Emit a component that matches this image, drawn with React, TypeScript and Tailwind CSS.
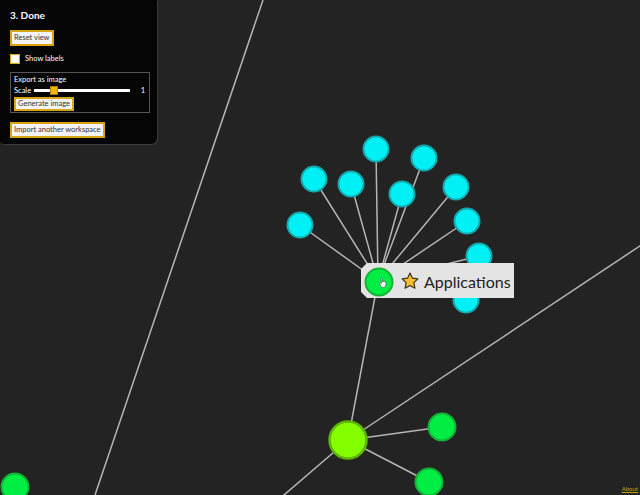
import { useState } from "react";

type Node = { x: number; y: number; r: number; fill: string; stroke: string };

const CYAN = { fill: "#00f0f5", stroke: "#16a9ad" };
const GREEN = { fill: "#00ee44", stroke: "#13b235" };

const hub = { x: 378, y: 281 };
const big = { x: 348, y: 440 };

const leaves: Node[] = [
  [376, 149],
  [424, 158],
  [314, 179],
  [351, 184],
  [402, 194],
  [456, 187],
  [300, 225],
  [467, 221],
  [479, 256],
  [466, 300],
].map(([x, y]) => ({ x, y, r: 12.5, ...CYAN }));

const others: Node[] = [
  { x: 442, y: 427, r: 13.5, ...GREEN },
  { x: 429, y: 482, r: 13.5, ...GREEN },
  { x: 15, y: 487, r: 13.5, ...GREEN },
];

// edges that run off the canvas
const longEdges = [
  [263, 0, 95, 495],
  [big.x, big.y, 700, 206],
  [big.x, big.y, 270, 507],
];

const Graph = () => (
  <svg className="absolute inset-0" width={640} height={495} viewBox="0 0 640 495">
    {longEdges.map(([x1, y1, x2, y2], i) => (
      <line key={i} x1={x1} y1={y1} x2={x2} y2={y2} stroke="#b5b5b5" strokeWidth={1.5} />
    ))}
    {leaves.map((n, i) => (
      <line key={"l" + i} x1={n.x} y1={n.y} x2={hub.x} y2={hub.y} stroke="#b5b5b5" strokeWidth={1.5} />
    ))}
    <line x1={hub.x} y1={hub.y} x2={big.x} y2={big.y} stroke="#b5b5b5" strokeWidth={1.5} />
    {others.slice(0, 2).map((n, i) => (
      <line key={"o" + i} x1={n.x} y1={n.y} x2={big.x} y2={big.y} stroke="#b5b5b5" strokeWidth={1.5} />
    ))}
    {[...leaves, ...others].map((n, i) => (
      <circle key={"n" + i} cx={n.x} cy={n.y} r={n.r} fill={n.fill} stroke={n.stroke} strokeWidth={2} />
    ))}
    <circle cx={big.x} cy={big.y} r={18.5} fill="#84ff00" stroke="#5cb300" strokeWidth={2.5} />
  </svg>
);

const Btn = ({ children, tall = true }: { children: React.ReactNode; tall?: boolean }) => (
  <button
    className={
      tall
        ? "border-2 border-[#d9a514] bg-[#f4f4f4] px-[2px] text-[7.5px] leading-[12px] text-[#333]"
        : "border-2 border-[#d9a514] bg-[#f4f4f4] px-[2px] text-[7.5px] leading-[10px] text-[#333]"
    }
  >
    {children}
  </button>
);

export default function App() {
  const [labels, setLabels] = useState(false);

  return (
    <div
      className="relative h-[495px] w-[640px] overflow-hidden bg-[#232323]"
      style={{ fontFamily: 'Lato, "Open Sans", sans-serif' }}
    >
      <Graph />

      {/* Side panel */}
      <div className="absolute left-0 top-0 flex h-[144px] w-[157px] flex-col items-start rounded-br-md rounded-bl-sm bg-[#050505] px-[10px] pt-[8px] text-white shadow-[1px_1px_0_#3a3a3a]">
        <h1 className="text-[10px] font-bold leading-[14px]">3. Done</h1>
        <div className="mt-[8px] flex">
          <Btn>Reset view</Btn>
        </div>
        <label className="mt-[8px] flex h-[10px] items-center gap-[5px] text-[7.5px] leading-[10px]">
          <span
            onClick={() => setLabels(!labels)}
            className="h-[10px] w-[10px] border border-[#d9a514] bg-white"
          />
          Show labels
        </label>
        <div className="mt-[8px] flex h-[41px] w-[140px] flex-col items-start border border-[#555] px-[3px] pt-[1px] text-[7.5px] leading-[11px]">
          <span>Export as image</span>
          <div className="flex h-[11px] w-full items-center">
            <span>Scale</span>
            <div className="relative ml-[3px] h-[3px] w-[96px] bg-white">
              <span className="absolute left-[16px] top-[-3px] h-[9px] w-[8px] border border-[#a87a00] bg-[#f2b600]" />
            </div>
            <span className="ml-auto mr-[1px]">1</span>
          </div>
          <div className="mt-[1px] flex">
            <Btn tall={false}>Generate image</Btn>
          </div>
        </div>
        <div className="mt-[9px] flex">
          <Btn>Import another workspace</Btn>
        </div>
      </div>

      {/* Hover label */}
      <div className="absolute left-[361px] top-[263px] flex h-[35px] w-[153px] items-center bg-[#e4e4e4] pl-[2px] shadow-[2px_2px_0_#555] [clip-path:polygon(6px_0,100%_0,100%_100%,6px_100%,0_calc(100%-6px),0_6px)]">
        <svg width={32} height={32} viewBox="0 0 32 32">
          <circle cx={16} cy={17} r={13.5} fill="#00ee44" stroke="#13b235" strokeWidth={2} />
          <path
            d="M18 13.2c0-.9 1.3-.9 1.3 0v3.6c.3-.7 1.3-.6 1.4.1.3-.6 1.3-.5 1.3.3.3-.5 1.2-.3 1.1.5l-.3 2.6c-.2 1.4-1.2 2.2-2.5 2.2-1.2 0-2-.6-2.5-1.6l-1.3-2.4c-.4-.7.5-1.3 1.1-.7l.9 1z"
            fill="#fff"
            stroke="#444"
            strokeWidth={0.6}
            strokeLinejoin="round"
          />
        </svg>
        <svg className="ml-[5px]" width={20} height={20} viewBox="0 0 24 24">
          <path
            d="M12 2.5l2.9 6.1 6.6.8-4.9 4.6 1.3 6.6L12 17.3l-5.9 3.3 1.3-6.6-4.9-4.6 6.6-.8z"
            fill="#f7bf2e"
            stroke="#3a3020"
            strokeWidth={1.4}
            strokeLinejoin="round"
          />
        </svg>
        <span className="ml-[4px] mt-[2px] text-[16px] leading-none text-[#222]">Applications</span>
      </div>

      <a className="absolute bottom-[3px] right-[2px] text-[6px] leading-none text-[#c9a100] underline">
        About
      </a>
    </div>
  );
}
